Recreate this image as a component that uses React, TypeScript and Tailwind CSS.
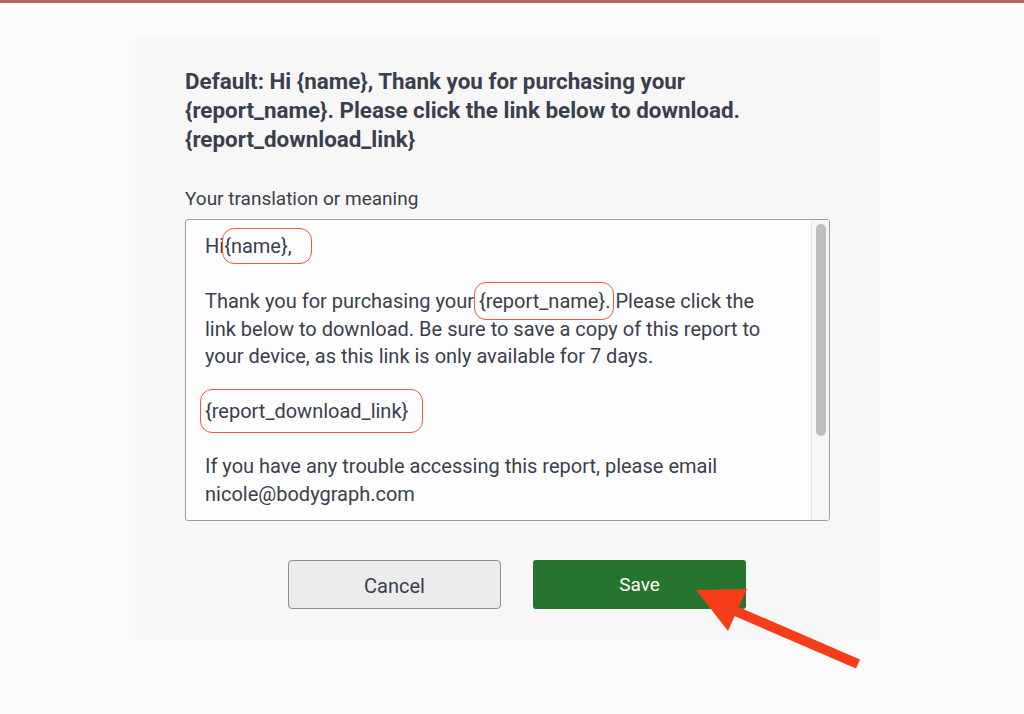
import React from "react";

function Mark({ children, l, r, t, b }: { children: React.ReactNode; l: number; r: number; t: number; b: number }) {
  return (
    <span className="relative">
      {children}
      <span
        className="pointer-events-none absolute rounded-[12px] border-[1.5px] border-[#ee5a42]"
        style={{ left: -l, right: -r, top: -t, bottom: -b }}
      />
    </span>
  );
}

export default function App() {
  return (
    <div className="relative min-h-[714px] bg-[#fbfbfb]" style={{ fontFamily: "Roboto, 'Liberation Sans', sans-serif" }}>
      <div className="h-[3px] bg-[#b06b52]" />
      <div className="ml-[135px] mt-[34px] h-[603px] w-[745px] bg-[#f7f7f7] pl-[50px] pt-[30px]">
        <h1 className="w-[600px] text-[22.4px] font-bold leading-[29px] text-[#3a3e4d]">
          Default: Hi {"{name}"}, Thank you for purchasing your {"{report_name}"}. Please click the link below to download. {"{report_download_link}"}
        </h1>
        <div className="mt-[33px] text-[19px] leading-[24px] text-[#3a3e4a]">Your translation or meaning</div>
        <div className="mt-[8px] flex h-[302px] w-[645px] overflow-hidden rounded-[3px] border border-[#a89d95] bg-[#fdfdfd]">
          <div className="flex-1 pl-[19px] pr-[31px] pt-[13px] text-[20px] leading-[27.5px] text-[#3a3e4d]">
            <p>
              Hi<Mark l={2} r={20} t={6} b={6}>{"{name},"}</Mark>
            </p>
            <p className="mt-[27.5px]">
              Thank you for purchasing your <Mark l={5} r={4} t={7} b={7}>{"{report_name}."}</Mark> Please click the link below to download. Be sure to save a copy of this report to your device, as this link is only available for 7 days.
            </p>
            <p className="mt-[27.5px]">
              <Mark l={5} r={15} t={10} b={10}>{"{report_download_link}"}</Mark>
            </p>
            <p className="mt-[27.5px]">
              If you have any trouble accessing this report, please email nicole@bodygraph.com
            </p>
          </div>
          <div className="w-[18px] border-l border-[#e6e6e6] bg-[#f7f7f7] pt-[4px] pl-[4px]">
            <div className="h-[212px] w-[10px] rounded-full bg-[#bdbdbd]" />
          </div>
        </div>
        <div className="ml-[103px] mt-[39px] flex gap-[32px]">
          <button className="h-[49px] w-[213px] rounded-[4px] border border-[#8c8c92] bg-[#ececec] pt-[2px] text-[20px] text-[#3a3e4d]">
            Cancel
          </button>
          <button className="h-[49px] w-[213px] rounded-[3px] bg-[#26742d] pt-[1px] text-[19px] text-white">
            Save
          </button>
        </div>
      </div>
      <svg className="pointer-events-none absolute left-0 top-0" width="1024" height="714">
        <line x1="726" y1="607" x2="858" y2="664" stroke="#f43e1a" strokeWidth="10" />
        <polygon points="696,590 747,589 728,631" fill="#f43e1a" />
      </svg>
    </div>
  );
}
